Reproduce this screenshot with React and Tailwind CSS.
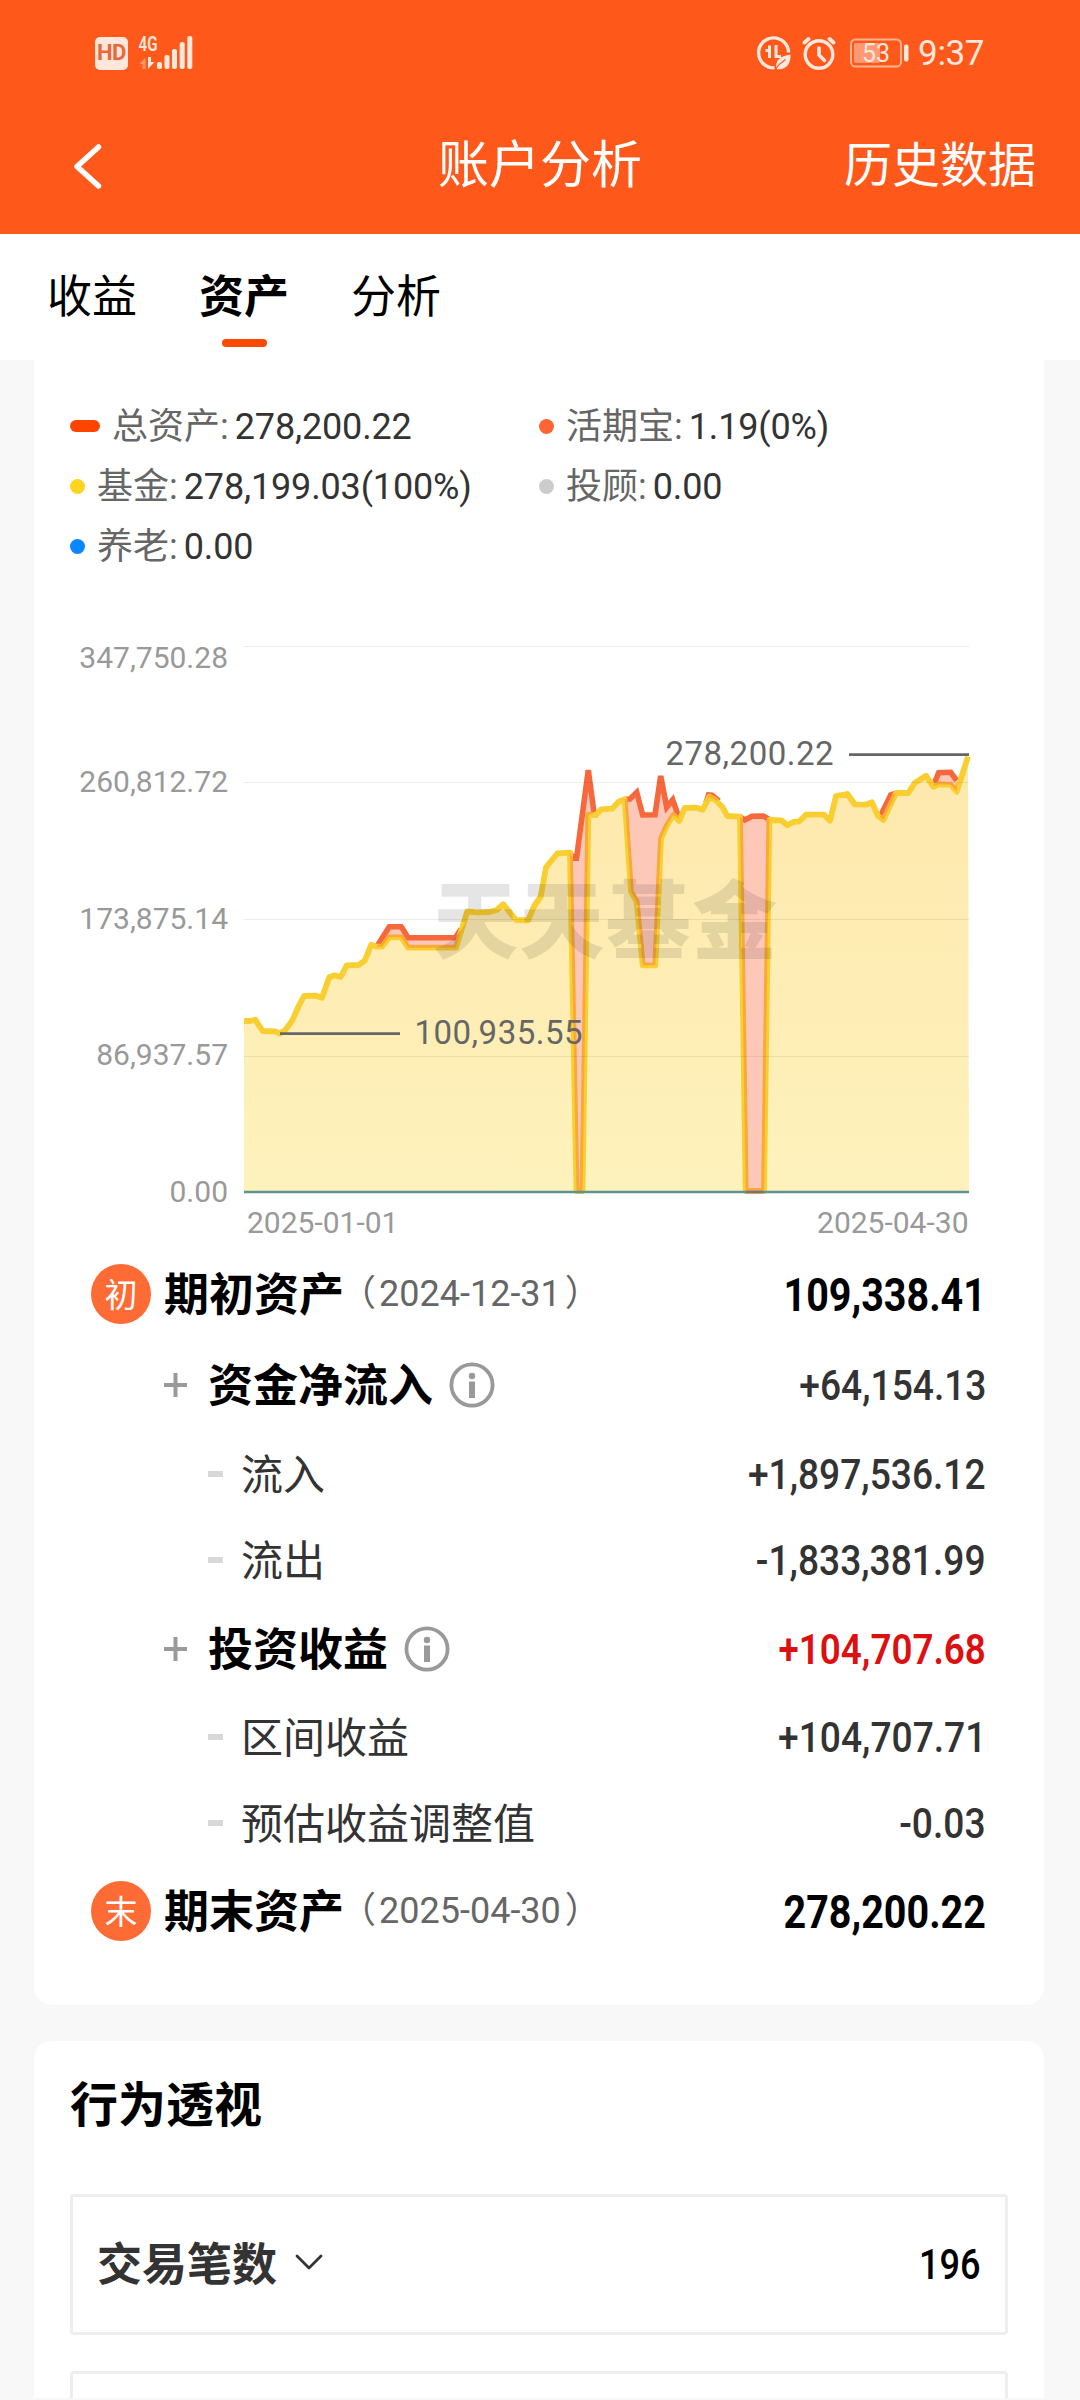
import { ChevronDown } from "lucide-react";

const legend = [
  { name: "总资产", value: "278,200.22", mark: "h-[12px] w-[30px] bg-[#ff4400]" },
  { name: "活期宝", value: "1.19(0%)", mark: "size-[15px] bg-[#ff6434]" },
  { name: "基金", value: "278,199.03(100%)", mark: "size-[15px] bg-[#fed420]" },
  { name: "投顾", value: "0.00", mark: "size-[15px] bg-[#cccccc]" },
  { name: "养老", value: "0.00", mark: "size-[15px] bg-[#0a87ff]" },
];

const axis = [
  { label: "347,750.28", y: 646.5, textY: 668 },
  { label: "260,812.72", y: 782.5, textY: 792 },
  { label: "173,875.14", y: 919.5, textY: 928.5 },
  { label: "86,937.57", y: 1056.5, textY: 1065 },
  { label: "0.00", y: 1192, textY: 1201.5 },
];

const fundLine =
  "244,1021 250,1021 255.3,1019.7 262.7,1031 275.3,1031.3 280,1033.7 285.3,1030 292,1021 298.7,1006 304,996 316,995.7 322,997.7 329.3,977.3 334.7,975.3 340.7,977 346.7,965.3 358.7,965 364.7,960.7 371.3,944.7 376.7,946.7 382,946.7 389.3,937.3 401.3,937.3 408,947.7 456,947.7 467.3,911.3 476.7,912.3 489.3,912 496.7,910 503.3,904.3 516,920 528,920.3 534.7,905 540.7,896.7 546,867.3 557.3,853.5 570,852.7 576.5,1191 582.5,1191 588.3,814.7 596,815 601.3,809.3 612,808.7 618.7,801.7 624.7,799.3 631,891.7 636.7,901.7 642.7,965.3 655.3,965.3 661,838.7 666.7,826 673.3,815 679.3,821 684.7,808 696.7,807.7 702.7,809.7 709.3,796.7 715.3,800 722.7,807.3 727.3,816 740,816.7 745.7,1191 764,1191 769.3,820 781.3,820.3 787.3,825.3 793.3,822 799.3,821.3 806,814.7 824,814.7 830,820.7 836,796 847.3,794 854.7,804.3 866,804.7 872,802.3 878,816 883.3,820 889,808 896,793 908.3,793 914.7,783 926,775.7 933.3,786.7 939.3,784.3 950.7,784.7 956.7,791.7 968,756.7";

// stretches where the total rises above the fund value: top edge, then the fund edge back
const gaps = [
  {
    top: "376.7,946.7 389.3,926.7 401.3,926.7 408,937.7 455.3,937.7 461,929",
    bottom: "456,947.7 408,947.7 401.3,937.3 389.3,937.3 382,946.7",
  },
  {
    top: "570,853 573.3,858.3 576.5,858.3 588.3,770 594,813",
    bottom: "588.3,814.7 582.5,1191 576.5,1191",
  },
  {
    top: "624.7,799.3 630,799 636.7,792.3 642.7,815 655,814.7 660.7,776 666.7,807.3 672.7,799.7 679.3,819",
    bottom: "673.3,815 666.7,826 661,838.7 655.3,965.3 642.7,965.3 636.7,901.7 631,891.7",
  },
  { top: "706,803 708.5,795 712,795.3 719,801", bottom: "715.3,800 709.3,796.7" },
  {
    top: "740,816.7 744.7,820 752,816.3 763.3,816 769.3,819.5",
    bottom: "764,1191 745.7,1191",
  },
  { top: "880,817 890.7,795 896,793", bottom: "889,808 883.3,820" },
  {
    top: "933.3,786 938.7,772.7 950.7,772.3 956.7,780.7",
    bottom: "956.7,791.7 950.7,784.7 939.3,784.3",
  },
];

const numberClass = "inline-block origin-right leading-none whitespace-nowrap";

const SignalIcons = () => (
  <svg width="62" height="66" viewBox="136 20 62 66" fill="#ffe7dc">
    <text x="138.5" y="51" fontSize="21" fontWeight="600" textLength="19" lengthAdjust="spacingAndGlyphs">
      4G
    </text>
    <path d="M139.5 64l6-6.5V69h-3v-5z" opacity=".45" />
    <path d="M148 57h3v5h3.5L148 69z" />
    <rect x="157" y="62" width="5" height="7" rx="2" />
    <rect x="164.5" y="55" width="5" height="14" rx="2" />
    <rect x="172" y="49" width="5" height="20" rx="2" />
    <rect x="179.7" y="42" width="5" height="27" rx="2" />
    <rect x="187.3" y="36" width="5" height="33" rx="2" />
  </svg>
);

const DataSaverIcon = () => (
  <svg width="36" height="36" viewBox="0 0 36 36" fill="none" stroke="#ffe7dc">
    <path d="M18.5 32.8A15 15 0 1 1 32.6 17.5" strokeWidth="3.4" />
    <path d="M9.5 15.5h4V10.500v12.500M20 10v11.500h5" strokeWidth="3" />
    <path d="M20.5 34c-2-9 4-13 14-14.5C35 30 29 35.5 20.5 34z" fill="#ffe7dc" stroke="none" />
    <path d="M19 35c3.5-5.5 6.5-8 10.5-10.5" stroke="#ff581b" strokeWidth="1.2" />
  </svg>
);

const AlarmIcon = () => (
  <svg width="34" height="36" viewBox="0 0 34 36" fill="none" stroke="#ffe7dc" strokeLinecap="round">
    <circle cx="17" cy="19.5" r="13.8" strokeWidth="3.4" />
    <path d="M17 13v7l5.5 5.5" strokeWidth="3.6" />
    <path d="M2.5 7.5L6.5 4M31.5 7.5L27.5 4" strokeWidth="3.8" />
  </svg>
);

const BatteryIcon = () => (
  <svg width="60" height="30" viewBox="0 0 60 30">
    <rect x="1" y="1.5" width="50" height="27" rx="4.5" fill="none" stroke="#ffb393" strokeWidth="2" />
    <rect x="4" y="5" width="26" height="20" rx="2" fill="#ff9a74" />
    <rect x="54" y="6.5" width="4.5" height="17" rx="2" fill="#ffe7dc" />
    <text x="12" y="23.5" fontSize="25" fill="#ffe7dc" textLength="28">
      53
    </text>
  </svg>
);

const InfoIcon = () => (
  <svg width="46" height="46" viewBox="0 0 46 46" fill="#999">
    <circle cx="23" cy="23" r="20.6" fill="none" stroke="#999" strokeWidth="3.8" />
    <circle cx="23" cy="14" r="3.2" />
    <rect x="20" y="19.5" width="6" height="16.5" />
  </svg>
);

const PlusMark = () => (
  <svg className="mr-[21px]" width="23" height="24" viewBox="0 0 23 24">
    <path d="M11.5 0v24M0 12h23" stroke="#999" strokeWidth="4" />
  </svg>
);

function AssetChart() {
  return (
    <svg width="1010" height="673" viewBox="34 576 1010 673">
      <defs>
        <linearGradient id="fund" x1="0" y1="0" x2="0" y2="1">
          <stop offset="0" stopColor="#fee8ac" />
          <stop offset="1" stopColor="#fef2bc" />
        </linearGradient>
      </defs>
      {axis.map((item) => (
        <text
          key={item.label}
          x="228"
          y={item.textY}
          fontSize="30"
          fill="#999"
          textAnchor="end"
        >
          {item.label}
        </text>
      ))}
      <polygon points={`244,1192 ${fundLine} 969,1192`} fill="url(#fund)" />
      {gaps.map((gap) => (
        <polyline key={gap.top} points={gap.top} fill="none" stroke="#f4683c" strokeWidth="5.6" />
      ))}
      <polyline points={fundLine} fill="none" stroke="#f9ce30" strokeWidth="5.8" strokeLinejoin="round" />
      {gaps.map((gap) => (
        <polygon key={gap.bottom} points={`${gap.top} ${gap.bottom}`} fill="#fd6a40" fillOpacity=".37" />
      ))}
      {axis.slice(0, 4).map((item) => (
        <line key={item.y} x1="244" x2="969" y1={item.y} y2={item.y} stroke="#000" strokeOpacity=".07" />
      ))}
      <line x1="244" x2="969" y1="1192" y2="1192" stroke="#5f938f" strokeWidth="2.4" />
      <line x1="746" x2="763" y1="1192" y2="1192" stroke="#84698a" strokeWidth="2.4" />
      <text x="433" y="952" fontSize="85" fontWeight="900" fill="#000" fillOpacity=".1" textLength="344">
        天天基金
      </text>
      <g stroke="#666" strokeWidth="2.8">
        <line x1="280" x2="400" y1="1033.7" y2="1033.7" />
        <line x1="849" x2="969" y1="754.7" y2="754.7" />
      </g>
      <g fontSize="33" fill="#666">
        <text x="414.5" y="1044" textLength="168">
          100,935.55
        </text>
        <text x="665.5" y="765" textLength="168">
          278,200.22
        </text>
      </g>
      <g fontSize="30" fill="#999">
        <text x="247" y="1233">
          2025-01-01
        </text>
        <text x="968.5" y="1233" textAnchor="end">
          2025-04-30
        </text>
      </g>
    </svg>
  );
}

function PeriodRow({ badge, title, date, value, className }) {
  return (
    <div className={`flex items-center pr-[58px] pl-[57px] ${className}`}>
      <span className="flex size-[60px] items-center justify-center rounded-full bg-[#ff6b35] pt-[2px] text-[33px] leading-none text-white">
        {badge}
      </span>
      <span className="ml-[13px] pt-[3px] text-[45px] leading-none font-bold text-black">{title}</span>
      <span className="-ml-1 text-[36px] leading-none text-[#666]">
        （<span className="mr-[4px] ml-[3px]">{date}</span>）
      </span>
      <span className={`${numberClass} ml-auto scale-x-[0.84] text-[47px] font-bold text-black`}>{value}</span>
    </div>
  );
}

function GroupRow({ title, value, valueClass, className }) {
  return (
    <div className={`flex items-center pr-[58px] pl-[130px] ${className}`}>
      <PlusMark />
      <span className="mr-[16px] pt-[3px] text-[45px] leading-none font-bold text-black">{title}</span>
      <InfoIcon />
      <span className={`${numberClass} ml-auto pt-[2px] text-[42px] ${valueClass}`}>{value}</span>
    </div>
  );
}

function DetailRow({ title, value, className }) {
  return (
    <div className={`flex items-center pr-[58px] pl-[174px] text-[42px] text-[#333] ${className}`}>
      <span className="h-[6px] w-[15px] bg-[#d8d8d8]" />
      <span className="ml-[18px] pt-[3px] leading-none">{title}</span>
      <span className={`${numberClass} ml-auto scale-x-[0.885] pt-[2px] font-medium`}>{value}</span>
    </div>
  );
}

export default function App() {
  return (
    <div className="h-[2400px] w-[1080px] overflow-hidden bg-[#f8f8f8] font-['Roboto','Noto_Sans_CJK_SC',sans-serif]">
      <header className="h-[234px] bg-[#ff581b] text-white">
        <div className="flex h-[106px] items-center pr-[96px] pl-[95px] text-[#ffe7dc]">
          <span className="flex size-[33px] items-center justify-center rounded-[5px] bg-[#ffe7dc] text-[22px] leading-none font-bold tracking-[-0.5px] text-[#e8683a]">
            HD
          </span>
          <span className="ml-[8px]">
            <SignalIcons />
          </span>
          <div className="ml-auto flex items-center">
            <DataSaverIcon />
            <span className="ml-[10px]">
              <AlarmIcon />
            </span>
            <span className="ml-[14px]">
              <BatteryIcon />
            </span>
            <span className="ml-[8px] text-[35px] leading-none tracking-[-0.4px]">9:37</span>
          </div>
        </div>
        <nav className="grid h-[119px] grid-cols-3 items-center pr-[44px] pl-[73px]">
          <svg width="29" height="46" viewBox="0 0 29 46" fill="none" stroke="#fff" strokeWidth="5.5">
            <path d="M25.5 4L4 23.5l21.5 19.5" strokeLinecap="round" strokeLinejoin="round" />
          </svg>
          <h1 className="-ml-[29px] text-center text-[51px] leading-none font-normal">账户分析</h1>
          <span className="text-right text-[48px] leading-none">历史数据</span>
        </nav>
      </header>

      <div className="flex h-[126px] gap-[62px] bg-white pt-[41px] pl-[47px] text-[45px] leading-none text-black">
        <span>收益</span>
        <div className="flex flex-col items-center">
          <span className="font-bold">资产</span>
          <span className="mt-[19px] h-[8px] w-[45px] rounded-full bg-[#fb4a05]" />
        </div>
        <span>分析</span>
      </div>

      <main className="pr-[36px] pl-[34px]">
        <section className="h-[1645px] rounded-b-[18px] bg-white pt-[36px]">
          <ul className="grid grid-cols-[469px_1fr] pl-[36px] text-[36px] leading-none">
            {legend.map((item) => (
              <li key={item.name} className="flex h-[60px] items-center">
                <span className={`mr-[12px] rounded-full ${item.mark}`} />
                <span className="pt-[2px] text-[#666]">{item.name}:</span>
                <span className="ml-[6px] pt-[2px] tracking-[-0.15px] text-[#333]">{item.value}</span>
              </li>
            ))}
          </ul>
          <AssetChart />
          <PeriodRow badge="初" title="期初资产" date="2024-12-31" value="109,338.41" className="h-[90px]" />
          <GroupRow
            title="资金净流入"
            value="+64,154.13"
            valueClass="scale-x-[0.885] font-medium text-[#333]"
            className="h-[92px]"
          />
          <DetailRow title="流入" value="+1,897,536.12" className="h-[86px]" />
          <DetailRow title="流出" value="-1,833,381.99" className="h-[86px]" />
          <GroupRow
            title="投资收益"
            value="+104,707.68"
            valueClass="scale-x-[0.875] font-semibold text-[#dc1010]"
            className="h-[92px]"
          />
          <DetailRow title="区间收益" value="+104,707.71" className="h-[84px]" />
          <DetailRow title="预估收益调整值" value="-0.03" className="h-[88px]" />
          <PeriodRow badge="末" title="期末资产" date="2025-04-30" value="278,200.22" className="h-[88px]" />
        </section>

        <section className="mt-[36px] h-[357px] overflow-hidden rounded-t-[18px] bg-white px-[36px] pt-[41px]">
          <h2 className="text-[48px] leading-none font-bold text-black">行为透视</h2>
          <div className="mt-[64px] flex h-[141px] items-center rounded-[4px] border-[3px] border-[#eee] pr-[24px] pl-[24px]">
            <span className="pt-[2px] text-[45px] leading-none font-bold text-[#333]">交易笔数</span>
            <ChevronDown className="mb-[5px] ml-[8px]" size={48} strokeWidth={1.4} color="#333" />
            <span className={`${numberClass} ml-auto scale-x-[0.86] text-[42px] font-medium text-black`}>196</span>
          </div>
          <div className="mt-[36px] h-[141px] rounded-[4px] border-[3px] border-[#eee]" />
        </section>
      </main>
    </div>
  );
}
